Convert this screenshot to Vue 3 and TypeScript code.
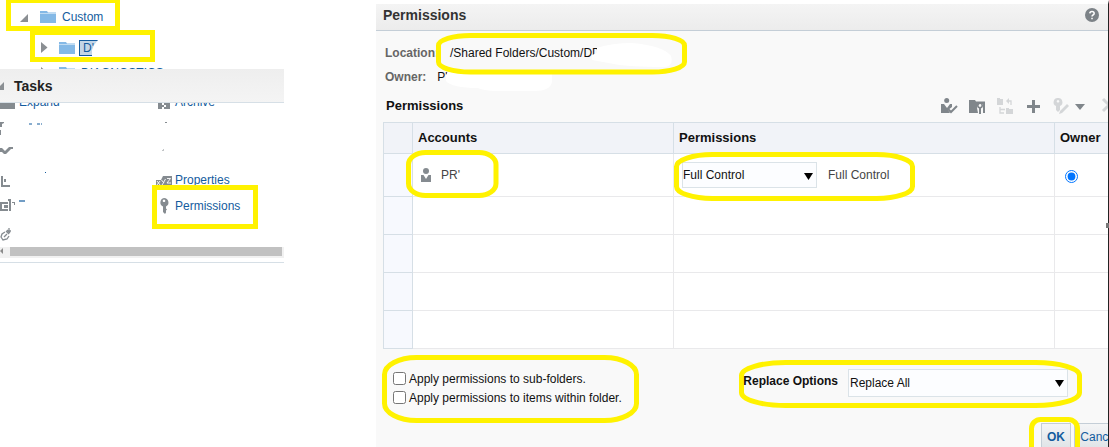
<script setup lang="ts">
import { ref } from 'vue'

const tasks = [
  ['Expand', 'Archive'],
  ['', ''],
  ['', ''],
  ['', 'Properties'],
  ['', 'Permissions'],
  ['', ''],
]

const emptyRows = 4
const permission = ref('Full Control')
const replaceOption = ref('Replace All')
const subFolders = ref(false)
const folderItems = ref(false)

// rounded marker strokes: x, y, width, height, rx, ry
const markers = [
  [438.5, 35.5, 246, 36.5, 32, 10],
  [408.5, 152.5, 87.5, 43, 17, 12],
  [676.5, 154.5, 236, 44, 36, 12],
  [384.5, 357.5, 252, 63, 32, 17],
  [741.5, 362.5, 338, 43, 44, 13],
  [1031.5, 419.5, 46, 50, 9, 9],
]
const boxes = [
  [8.5, 0.5, 109, 28],
  [32.5, 32.5, 120, 27],
  [154.5, 187.5, 101, 39],
]
</script>

<template>
  <div class="page">
    <aside class="catalog">
      <div class="tree">
        <div class="node first">
          <svg class="twist" width="8" height="8"><path d="M8 0V8H0z" /></svg>
          <svg class="folder" width="16" height="13"><path d="M0 1h7l1 1.500h8V3H0zM0 3.500h16V13H0z" /></svg>
          <span>Custom</span>
        </div>
        <div class="node second">
          <svg class="twist" width="7" height="11"><path d="M0 0L6.500 5.500L0 11z" /></svg>
          <svg class="folder" width="16" height="13"><path d="M0 1h7l1 1.500h8V3H0zM0 3.500h16V13H0z" /></svg>
          <span class="selected">D'</span>
        </div>
        <div class="node third">
          <svg class="twist" width="7" height="11"><path d="M0 0L6.500 5.500L0 11z" /></svg>
          <svg class="folder" width="16" height="13"><path d="M0 1h7l1 1.500h8V3H0zM0 3.500h16V13H0z" /></svg>
          <span>DIAGNOSTICS</span>
        </div>
      </div>
      <div class="tasks-head">
        <svg width="4" height="8"><path d="M4 0V8H0V4z" fill="#8b8f93" /></svg>
        <b>Tasks</b>
      </div>
      <div class="tasks">
        <div v-for="(row, r) in tasks" :key="r" class="task-row">
          <div class="task">
            <svg v-if="r === 0" width="16" height="16"><path d="M0 4h15v11H0z" /></svg>
            <svg v-else-if="r === 1" width="50" height="20">
              <path d="M0 4h4v1l-2 1v3H0zM0 12h1v5H0z" />
              <path d="M29 6h4M37 6h5" stroke="#145c9e" stroke-dasharray="3 1" />
            </svg>
            <svg v-else-if="r === 2" width="16" height="16"><path d="M0 2h2l3 3l4-4h4v2h-2L6 8H4L2 6H0z" /></svg>
            <svg v-else-if="r === 3" width="50" height="20">
              <path d="M1 6h2v9h7v2H1zM4 9h2v3H4z" />
              <path d="M45 2h1v1h-1z" fill="#145c9e" />
            </svg>
            <svg v-else-if="r === 4" width="26" height="20">
              <path d="M0 6h8v2H2v5h6v2H0zM4 9h4v3H4zM8 3h3v12H9V5H8zM12 6h3v3h-1V7h-2z" />
              <path d="M19 5h6" stroke="#145c9e" stroke-width="1.200" />
            </svg>
            <svg v-else class="link" width="16" height="16">
              <path d="M5 5L2 7L1 10L3 13L7 12L9 9M4 10L7 7M6 4L9 7M7 3l3 3M9 1v3h2" fill="none" stroke="#858b90" stroke-width="1.300" />
            </svg>
            <span>{{ row[0] }}</span>
          </div>
          <div class="task">
            <svg v-if="r === 0" width="16" height="16"><path d="M2 4h4v11H2zM10 4h4v11h-4zM6 7h2v2H6zM8 9h2v2H8zM6 11h2v2H6zM8 13h2v2H8z" /></svg>
            <svg v-else-if="r === 1" width="20" height="20"><path d="M9 4h2v1H9z" /></svg>
            <svg v-else-if="r === 2" width="16" height="16"><path d="M6 5l2-2v1L7 5z" /></svg>
            <svg v-else-if="r === 3" width="16" height="16">
              <path d="M0 8h5l2-4h9v9H0z" />
              <path d="M1 9l3 4M4 9l-3 4M5.500 8l2 2.500l2-3.500M8 10l-2 3M11 6.500h3.500l-3.500 4.500h4" fill="none" stroke="#fff" stroke-width=".9" />
            </svg>
            <svg v-else-if="r === 4" width="16" height="16">
              <path fill-rule="evenodd" d="M8 0a4.500 4.500 0 0 1 2 8.500v2l1 1l-1 1v2L9 16L7 14V8.500A4.500 4.500 0 0 1 8 0zM8 1.500a1.300 1.300 0 1 0 .01 0z" />
            </svg>
            <svg v-else width="16" height="16"></svg>
            <span>{{ row[1] }}</span>
          </div>
        </div>
      </div>
      <div class="scroll">
        <svg width="4" height="8"><path d="M3 1v6L0 4z" fill="#8b8b8b" /></svg>
        <div class="thumb"></div>
      </div>
    </aside>

    <main class="dialog">
      <header>
        <span>Permissions</span>
        <svg width="14" height="14">
          <circle cx="7" cy="7" r="7" fill="#7c8287" />
          <path d="M4.800 5.400Q4.900 3.400 7 3.400T9.200 5.300Q9.200 6.400 8 7Q7 7.500 7 8.600M7 9.700v1.500" fill="none" stroke="#fff" stroke-width="1.500" />
        </svg>
      </header>
      <div class="info">
        <div class="line"><b>Location:</b><span class="path">/Shared Folders/Custom/DD</span></div>
        <div class="line"><b>Owner:</b><span class="who">P'</span></div>
      </div>
      <div class="toolbar">
        <h2>Permissions</h2>
        <svg class="tools" width="167" height="18">
          <g fill="#80868b">
            <circle cx="5.700" cy="3.500" r="2.500" />
            <path d="M0 7h3l3 4l3-4h2v3l-4 3l2 3H0z" />
            <path d="M7 12l3 3l6-6" fill="none" stroke="#80868b" stroke-width="2" />
            <path d="M28 3h6l1 1.500h9V7h-3a4 4 0 0 0-5 4l1 5h-9z" />
            <circle cx="39" cy="8.500" r="2.200" fill="none" stroke="#80868b" stroke-width="1.600" />
            <path d="M38 10h2v7h-2zM42 5h2v11h-2z" />
            <path d="M86 8h5V3h3v5h5v3h-5v5h-3v-5h-5z" />
            <path d="M134 7h10l-5 6z" />
          </g>
          <g fill="#d4d6d8">
            <path d="M56 1h3v1h3v6h-6zM65 11h3v1h4v5h-7z" />
            <path d="M59 10v6h4M59 12.500h5M66 4h4v4" fill="none" stroke="#d4d6d8" stroke-width="1.300" />
            <path d="M68 1v6l-3-3z" />
            <path fill-rule="evenodd" d="M117 1a4.200 4.200 0 0 1 2 8v4l-2 2l-2-2V9A4.200 4.200 0 0 1 117 1zM117 3a1.300 1.300 0 1 0 .01 0zM119 14l7-7l2 2l-7 7l-3 1z" />
            <path d="M162 2l12 12M174 2l-12 12" stroke="#d4d6d8" stroke-width="3" />
          </g>
        </svg>
      </div>
      <div class="grid">
        <div class="row head">
          <div></div>
          <div>Accounts</div>
          <div>Permissions</div>
          <div>Owner</div>
        </div>
        <div class="row entry">
          <div class="rowhead"></div>
          <div class="account">
            <svg width="10" height="14" fill="#858b90"><circle cx="5" cy="3" r="3" /><path d="M0 7h2.500L5 11l2.500-4H10v7H0z" /></svg>
            <span>PR'</span>
          </div>
          <div class="access">
            <div class="select">
              <select v-model="permission"><option>Full Control</option></select>
              <svg width="9" height="7"><path d="M0 0h9L4.500 7z" /></svg>
            </div>
            <span>{{ permission }}</span>
          </div>
          <div class="own"><input type="radio" checked></div>
        </div>
        <div v-for="n in emptyRows" :key="n" class="row">
          <div class="rowhead"></div><div></div><div></div><div></div>
        </div>
      </div>
      <div class="options">
        <div class="checks">
          <label><input v-model="subFolders" type="checkbox">Apply permissions to sub-folders.</label>
          <label><input v-model="folderItems" type="checkbox">Apply permissions to items within folder.</label>
        </div>
        <div class="replace">
          <b>Replace Options</b>
          <div class="select">
            <select v-model="replaceOption"><option>Replace All</option></select>
            <svg width="9" height="7"><path d="M0 0h9L4.500 7z" /></svg>
          </div>
        </div>
      </div>
      <footer>
        <button>OK</button>
        <button class="cancel">Cancel</button>
      </footer>
    </main>

    <!-- blanked-out names and marker strokes -->
    <svg class="notes" width="1109" height="447">
      <path d="M92 57V50L94 45L98 40V57z" fill="#fff" />
      <path d="M597 53L597 48Q612 43 632 43Q664 46 671 56Q674 65 666 67Q628 67 614 64L592 60V55z" fill="#fff" />
      <path d="M446 77V75L448 72H552V82Q550 91 535 91H493Q482 90 478 88Q452 88 446 81z" fill="#fff" />
      <path d="M1106 223h3v5h-3z" fill="#777" />
      <rect v-for="([x, y, w, h], i) in boxes" :key="'b' + i" :x="x" :y="y" :width="w" :height="h" />
      <rect v-for="([x, y, w, h, rx, ry], i) in markers" :key="'m' + i" :x="x" :y="y" :width="w" :height="h" :rx="rx" :ry="ry" />
    </svg>
  </div>
</template>

<style>
body {
  margin: 0;
  background: #fff;
}
</style>

<style scoped>
* {
  box-sizing: border-box;
}

.page {
  position: relative;
  display: flex;
  justify-content: space-between;
  width: 1109px;
  height: 447px;
  overflow: hidden;
  font: 12px "Liberation Sans", Arial, sans-serif;
  color: #111;
}

svg {
  display: block;
  flex: none;
}

.catalog {
  width: 284px;
  color: #145c9e;
}

.tree {
  height: 69px;
  overflow: hidden;
}

.node {
  display: flex;
  align-items: center;
  height: 32px;
}

.node .twist {
  fill: #8b8f93;
}

.node .folder {
  fill: #84b9e6;
}

.first {
  padding-left: 20px;
}

.first .folder {
  margin: 0 6px 0 12px;
}

.first .twist {
  margin-top: 4px;
}

.first span {
  padding-top: 1px;
}

.second {
  height: 31px;
  padding-left: 41px;
}

.second .folder,
.third .folder {
  margin: 0 4px 0 11px;
}

.selected {
  width: 19px;
  height: 16px;
  padding-left: 3px;
  border: 1px solid #145c9e;
  background: #c3d5e6;
  line-height: 14px;
}

.third {
  height: 18px;
  padding-left: 41px;
}

.third span {
  padding: 2px 0 0 2px;
}

.tasks-head {
  display: flex;
  align-items: center;
  gap: 10px;
  height: 34px;
  border-bottom: 1px solid #d6dfe6;
  background: linear-gradient(#eee, #f4f4f4);
  color: #222;
  font-size: 14px;
}

.tasks {
  height: 144px;
  overflow: hidden;
}

.task-row {
  display: grid;
  grid-template-columns: 156px 128px;
  height: 26px;
}

.task-row:first-child {
  margin-top: -14px;
}

.task {
  display: flex;
  align-items: center;
  gap: 3px;
}

.task svg {
  fill: #858b90;
}

.task .link {
  margin-top: 6px;
}

.scroll {
  display: flex;
  gap: 6px;
  height: 16px;
  border-bottom: 1px solid #d6dfe6;
  background: linear-gradient(#f1f1f1 11px, #fff 11px);
}

.thumb {
  width: 272px;
  height: 9px;
  background: #c1c1c1;
}

.dialog {
  display: flex;
  flex-direction: column;
  width: 733px;
  height: 447px;
  border-top: 4px solid #fff;
  border-right: 1px solid #222;
  background: #f9f9f9;
  overflow: hidden;
}

header {
  display: flex;
  flex: none;
  align-items: center;
  justify-content: space-between;
  height: 27px;
  padding: 0 9px 4px 7px;
  border-bottom: 1px solid #c4ced7;
  background: linear-gradient(#f4f4f4, #ececec);
  color: #333;
  font-size: 14px;
  font-weight: bold;
}

.info {
  flex: none;
  height: 62px;
  padding: 10px 0 0 9px;
}

.line {
  display: flex;
  height: 24px;
  line-height: 24px;
}

.line b {
  color: #666;
}

.path {
  padding-left: 11px;
}

.who {
  padding-left: 11px;
}

.toolbar {
  display: flex;
  flex: none;
  align-items: center;
  justify-content: space-between;
  height: 29px;
  padding: 0 0 4px 10px;
}

h2 {
  margin: 0;
  font-size: 13px;
}

.tools {
  margin-top: 1px;
}

.grid {
  flex: none;
  margin-left: 7px;
  border-top: 1px solid #d6dfe6;
  border-left: 1px solid #d6dfe6;
  background: #fff;
}

.row {
  display: grid;
  grid-template-columns: 29px 261px 381px 53px;
  height: 38px;
}

.row > div {
  display: flex;
  align-items: center;
  border-right: 1px solid #e9e9eb;
  border-bottom: 1px solid #e9e9eb;
}

.row > div:last-child {
  border-right: 0;
}

.row.head {
  height: 31px;
  font-size: 13px;
  font-weight: bold;
}

.head > div {
  padding: 0 0 2px 5px;
  border-color: #d6dfe6 !important;
  background: #f1f3f8;
}

.row > .rowhead {
  border-color: #d6dfe6;
  background: #f7f9fe;
}

.row.entry {
  height: 43px;
  color: #444;
}

.account {
  gap: 10px;
  padding-left: 8px;
}

.access {
  gap: 11px;
  padding-left: 8px;
}

.own {
  padding-left: 10px;
}

input {
  width: 13px;
  height: 13px;
  margin: 0;
}

.own input {
  margin-top: 3px;
}

.select {
  display: flex;
  position: relative;
  align-items: center;
  width: 135px;
  height: 26px;
  border: 1px solid #dbe3e8;
  background: #fcfdff;
}

select {
  width: 100%;
  height: 100%;
  padding: 0;
  border: 0;
  appearance: none;
  background: none;
  color: #111;
  font: inherit;
}

.select svg {
  position: absolute;
  right: 3px;
  top: 10px;
}

.options {
  display: flex;
  flex: none;
  justify-content: space-between;
  height: 74px;
  padding: 20px 40px 0 17px;
}

label {
  display: flex;
  align-items: center;
  gap: 3px;
  height: 19px;
}

.replace {
  display: flex;
  align-items: flex-start;
  gap: 10px;
}

.replace b {
  position: relative;
  z-index: 2;
  padding-top: 5px;
}

.replace .select {
  width: 220px;
  height: 28px;
}

.replace select {
  padding-left: 1px;
}

footer {
  display: flex;
  flex: none;
  gap: 3px;
  padding-left: 665px;
}

button {
  flex: none;
  width: 30px;
  height: 27px;
  padding: 0;
  border: 1px solid #c4ced7;
  background: linear-gradient(#f4f5f6, #dfe3e7);
  color: #145c9e;
  font: bold 12px "Liberation Sans", Arial, sans-serif;
}

.cancel {
  width: 50px;
  font-weight: normal;
}

.notes {
  position: absolute;
  left: 0;
  top: 0;
  z-index: 1;
  pointer-events: none;
}

.notes rect {
  fill: none;
  stroke: #fff200;
  stroke-width: 5;
}
</style>
